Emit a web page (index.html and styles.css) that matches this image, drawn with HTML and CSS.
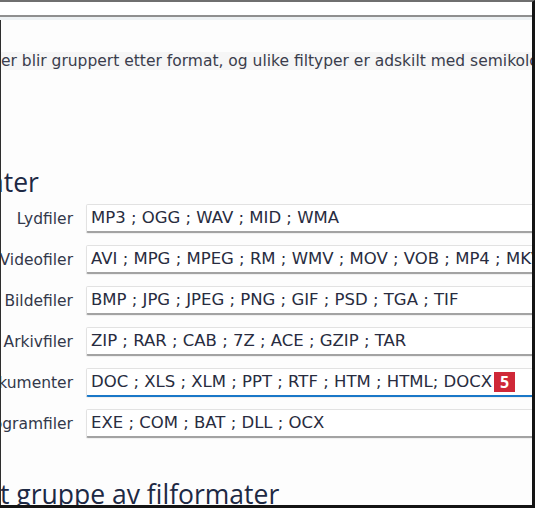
FILE: index.html
```html
<!DOCTYPE html>
<html lang="no">
<head>
<meta charset="utf-8">
<link rel="stylesheet" href="styles.css">
</head>
<body>
<div class="frame">
  <div class="topbar"></div>
  <div class="strip"></div>
  <div class="content">
    <p class="desc"><span>er blir gruppert etter format, og ulike filtyper er adskilt med semikolon</span></p>
    <h2 class="heading first">ater</h2>
    <div class="form">
      <label class="label">Lydfiler</label>
      <div class="field">MP3 ; OGG ; WAV ; MID ; WMA</div>
      <label class="label">Videofiler</label>
      <div class="field">AVI ; MPG ; MPEG ; RM ; WMV ; MOV ; VOB ; MP4 ; MKV</div>
      <label class="label">Bildefiler</label>
      <div class="field">BMP ; JPG ; JPEG ; PNG ; GIF ; PSD ; TGA ; TIF</div>
      <label class="label">Arkivfiler</label>
      <div class="field">ZIP ; RAR ; CAB ; 7Z ; ACE ; GZIP ; TAR</div>
      <label class="label">Dokumenter</label>
      <div class="field active">DOC ; XLS ; XLM ; PPT ; RTF ; HTM ; HTML; DOCX<span class="badge">5</span></div>
      <label class="label">Programfiler</label>
      <div class="field">EXE ; COM ; BAT ; DLL ; OCX</div>
    </div>
    <h2 class="heading second">t gruppe av filformater</h2>
  </div>
</div>
</body>
</html>
```

FILE: styles.css
```css
html, body {
  margin: 0;
  padding: 0;
}
body {
  width: 535px;
  height: 508px;
  overflow: hidden;
  background: #fdfdfd;
  font-family: "DejaVu Sans", Verdana, sans-serif;
  color: #34384a;
}
.frame {
  box-sizing: border-box;
  width: 535px;
  height: 508px;
  border-top: 2px solid #6f6f6f;
  border-right: 3px solid #141414;
  border-bottom: 3px solid #141414;
  display: flex;
  flex-direction: column;
  overflow: hidden;
}
.topbar {
  height: 13px;
  background: #ffffff;
  border-bottom: 2px solid #8f8f8f;
  flex: none;
}
.strip {
  height: 3px;
  background: #edf1f3;
  flex: none;
}
.content {
  flex: 1;
  border-left: 1px solid #2e2e2e;
  overflow: hidden;
  position: relative;
}
.desc {
  margin: 32px 0 0 0;
  font-size: 15.5px;
  line-height: 19px;
  white-space: nowrap;
  color: #3a3d4c;
}
.desc span {
  background: #f6f6f6;
}
.heading {
  margin: 0;
  font-family: "Open Sans", "Noto Sans", sans-serif;
  font-weight: 400;
  font-size: 26.5px;
  line-height: 32px;
  color: #1d2944;
  white-space: nowrap;
}
.heading.first {
  margin-top: 95px;
  margin-left: -12px;
}
.form {
  display: grid;
  grid-template-columns: 72px 1fr;
  column-gap: 13px;
  row-gap: 12px;
  margin-top: 6px;
  margin-right: -4px;
}
.label {
  justify-self: end;
  align-self: center;
  font-size: 15.5px;
  white-space: nowrap;
  color: #33384a;
}
.field {
  position: relative;
  box-sizing: border-box;
  height: 29px;
  padding: 0 4px 1px;
  display: flex;
  align-items: center;
  font-size: 16.5px;
  white-space: nowrap;
  color: #282c40;
  background: #ffffff;
  border: 1px solid #e2e2e2;
  border-bottom: 2px solid #a3a3a3;
  border-radius: 2px;
  box-shadow: 0 1px 1px rgba(0, 0, 0, 0.06);
}
.field.active {
  border-bottom-color: #1a78c8;
}
.badge {
  position: absolute;
  left: 407px;
  top: 3px;
  width: 21px;
  height: 20px;
  background: #cf2838;
  color: #ffffff;
  font-family: "Open Sans", "Noto Sans", sans-serif;
  font-weight: 700;
  font-size: 16px;
  line-height: 20px;
  text-align: center;
}
.heading.second {
  margin-top: 40px;
  margin-left: -1px;
}
```
